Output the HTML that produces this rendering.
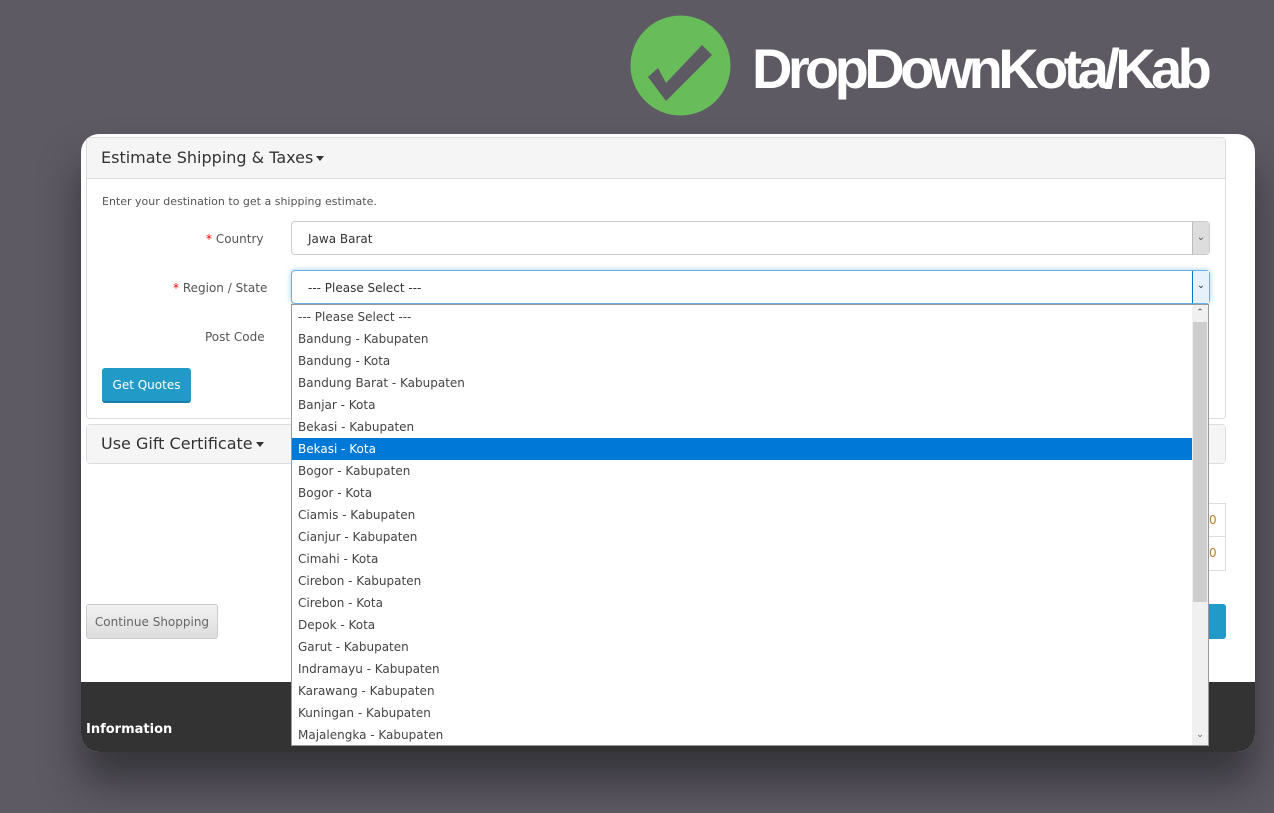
<!DOCTYPE html>
<html><head><meta charset="utf-8"><style>
*{box-sizing:border-box;margin:0;padding:0}
body{width:1274px;height:813px;background:#5d5a64;font-family:"DejaVu Sans","Liberation Sans",sans-serif;position:relative;overflow:hidden}
.abs{position:absolute}
.card{left:81px;top:134px;width:1174px;height:618px;background:#fff;border-radius:18px;overflow:hidden;box-shadow:0 30px 40px rgba(30,28,34,.6)}
.t{font-size:12px;color:#555;white-space:nowrap}
.panel{border:1px solid #ddd;border-radius:4px}
.ph{background:#f5f5f5;border-bottom:1px solid #ddd;font-size:16px;color:#333;padding:0 14px;line-height:40px}
.caret{display:inline-block;border-left:4px solid transparent;border-right:4px solid transparent;border-top:5px solid #333;vertical-align:middle;margin-left:3px}
.sel{border:1px solid #ccc;border-radius:4px;background:#fff;font-size:12px;color:#333;padding-left:16px;line-height:34px}
.list{left:291px;top:304px;width:918px;height:442px;background:#fff;border:1px solid #999;padding-top:1px}
.list div.r{height:22px;line-height:22px;padding-left:6px;font-size:12px;color:#444;width:900px}
.hl{background:#0078d7;color:#fff!important}
</style></head><body>
<svg class="abs" style="left:630px;top:15px" width="101" height="101"><circle cx="50.5" cy="50.5" r="50" fill="#68bd5a"/><path d="M18 62 L36 86 L82 40 L72 30 L36 68 L28 53 Z" fill="#5d5a64"/></svg>
<div class="abs" style="left:752px;top:36px;font-family:'Liberation Sans',sans-serif;font-weight:bold;font-size:56px;color:#fff;letter-spacing:-4.6px;line-height:66px">DropDownKota/Kab</div>
<div class="abs card">
 <div class="abs panel" style="left:5px;top:3px;width:1140px;height:282px">
  <div class="ph">Estimate Shipping &amp; Taxes<span class="caret"></span></div>
 </div>
 <div class="abs t" style="left:21px;top:61px;font-size:11px">Enter your destination to get a shipping estimate.</div>
 <div class="abs t" style="left:125px;top:98px"><span style="color:#f00">*</span> Country</div>
 <div class="abs t" style="left:92px;top:147px"><span style="color:#f00">*</span> Region / State</div>
 <div class="abs t" style="left:124px;top:196px">Post Code</div>
 <div class="abs sel" style="left:210px;top:87px;width:919px;height:34px">Jawa Barat</div>
 <div class="abs" style="left:1111px;top:88px;width:17px;height:32px;background:#ddd;border-left:1px solid #bbb;font-size:10px;color:#555;text-align:center;line-height:32px">⌄</div>
 <div class="abs sel" style="left:210px;top:136px;width:919px;height:34px;border-color:#66afe9;box-shadow:0 0 6px rgba(102,175,233,.6)">--- Please Select ---</div>
 <div class="abs" style="left:1111px;top:137px;width:17px;height:32px;background:#e5f1fb;border-left:1px solid #0078d7;font-size:10px;color:#333;text-align:center;line-height:30px">⌄</div>
 <div class="abs" style="left:21px;top:234px;width:89px;height:35px;background:#229ac8;border-radius:3px;border-bottom:2px solid #1a7ea6;color:#fff;font-size:12px;text-align:center;line-height:34px">Get Quotes</div>
 <div class="abs panel" style="left:5px;top:290px;width:1140px;height:40px"><div class="ph" style="border:0;line-height:38px">Use Gift Certificate<span class="caret"></span></div></div>
 <div class="abs" style="left:1100px;top:369px;width:45px;height:68px;border:1px solid #ddd"><div style="border-bottom:1px solid #ddd;height:33px"></div><div class="abs t" style="left:27px;top:9px;color:#c27b2a">0</div><div class="abs t" style="left:27px;top:42px;color:#c27b2a">0</div></div>
 <div class="abs" style="left:5px;top:470px;width:132px;height:35px;background:linear-gradient(#f2f2f2,#ddd);border:1px solid #ccc;border-radius:3px;color:#666;font-size:12px;text-align:center;line-height:34px">Continue Shopping</div>
 <div class="abs" style="left:1100px;top:470px;width:45px;height:35px;background:#229ac8;border-radius:3px"></div>
 <div class="abs" style="left:0;top:548px;width:1174px;height:70px;background:#333"></div>
 <div class="abs" style="left:5px;top:588px;color:#fff;font-weight:bold;font-size:13px">Information</div>
</div>
<div class="abs list">
 <div class="r">--- Please Select ---</div><div class="r">Bandung - Kabupaten</div><div class="r">Bandung - Kota</div><div class="r">Bandung Barat - Kabupaten</div><div class="r">Banjar - Kota</div><div class="r">Bekasi - Kabupaten</div><div class="r hl">Bekasi - Kota</div><div class="r">Bogor - Kabupaten</div><div class="r">Bogor - Kota</div><div class="r">Ciamis - Kabupaten</div><div class="r">Cianjur - Kabupaten</div><div class="r">Cimahi - Kota</div><div class="r">Cirebon - Kabupaten</div><div class="r">Cirebon - Kota</div><div class="r">Depok - Kota</div><div class="r">Garut - Kabupaten</div><div class="r">Indramayu - Kabupaten</div><div class="r">Karawang - Kabupaten</div><div class="r">Kuningan - Kabupaten</div><div class="r">Majalengka - Kabupaten</div>
 <div class="abs" style="left:900px;top:0;width:16px;height:440px;background:#f0f0f0"><div class="abs" style="top:0;width:16px;height:17px;font-size:9px;text-align:center;line-height:17px;color:#555">⌃</div><div class="abs" style="top:17px;left:1px;width:14px;height:280px;background:#cdcdcd"></div><div class="abs" style="top:423px;width:16px;height:17px;font-size:9px;text-align:center;line-height:14px;color:#555">⌄</div></div>
</div>
</body></html>
